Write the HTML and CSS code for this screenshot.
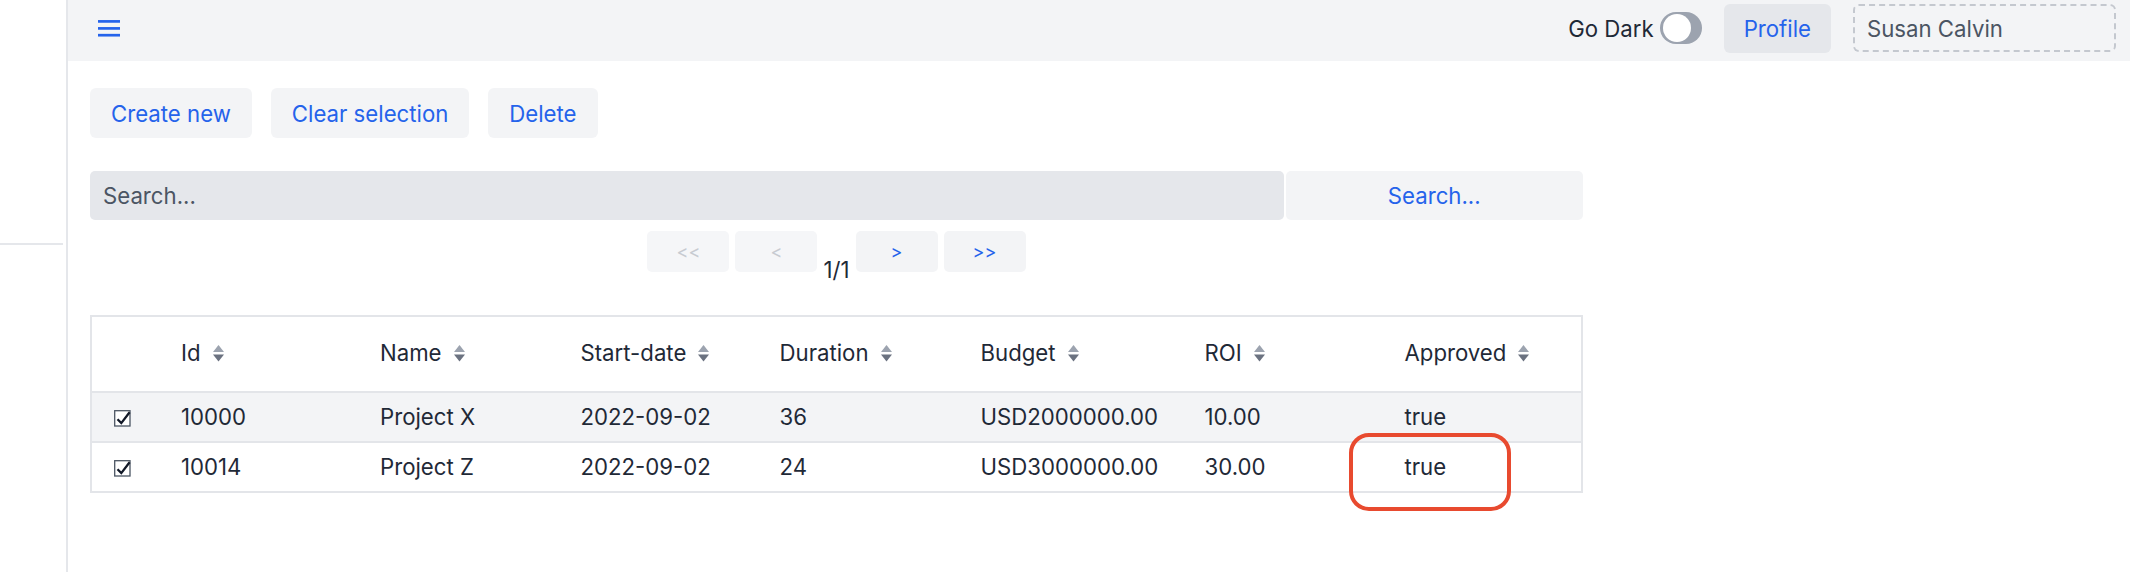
FILE: index.html
```html
<!DOCTYPE html>
<html lang="en">
<head>
<meta charset="utf-8">
<title>Projects</title>
<link rel="stylesheet" href="styles.css">
</head>
<body>
<div class="app">
  <aside class="sidebar"><div class="sidebar-rule"></div></aside>
  <div class="main">
    <header class="topbar">
      <button class="menu-btn" aria-label="Menu">
        <svg width="22" height="17" viewBox="0 0 22 17"><g stroke="#2563eb" stroke-width="2.7"><line x1="0" y1="1.4" x2="22" y2="1.4"/><line x1="0" y1="8.4" x2="22" y2="8.4"/><line x1="0" y1="15.2" x2="22" y2="15.2"/></g></svg>
      </button>
      <div class="top-right">
        <label class="dark-toggle"><span>Go Dark</span><span class="switch"><span class="knob"></span></span></label>
        <button class="profile-btn">Profile</button>
        <div class="user-box">Susan Calvin</div>
      </div>
    </header>
    <main class="content">
      <div class="actions">
        <button class="btn">Create new</button>
        <button class="btn">Clear selection</button>
        <button class="btn">Delete</button>
      </div>
      <div class="search-row">
        <div class="search-input">Search...</div>
        <button class="search-btn">Search...</button>
      </div>
      <div class="pager">
        <button class="pg-btn disabled">&lt;&lt;</button>
        <button class="pg-btn disabled">&lt;</button>
        <span class="pg-info">1/1</span>
        <button class="pg-btn">&gt;</button>
        <button class="pg-btn">&gt;&gt;</button>
      </div>
      <div class="table-wrap">
        <table class="grid">
          <colgroup>
            <col class="c-check"><col class="c-id"><col class="c-name"><col class="c-start"><col class="c-dur"><col class="c-budget"><col class="c-roi"><col>
          </colgroup>
          <thead>
            <tr>
              <th></th>
              <th>Id<span class="sort"><svg width="11" height="17" viewBox="0 0 11 17"><path d="M0 7 L5.5 0 L11 7 Z" fill="#9ca3af"/><path d="M0 9.5 L11 9.5 L5.5 16.5 Z" fill="#6b7280"/></svg></span></th>
              <th>Name<span class="sort"><svg width="11" height="17" viewBox="0 0 11 17"><path d="M0 7 L5.5 0 L11 7 Z" fill="#9ca3af"/><path d="M0 9.5 L11 9.5 L5.5 16.5 Z" fill="#6b7280"/></svg></span></th>
              <th>Start-date<span class="sort"><svg width="11" height="17" viewBox="0 0 11 17"><path d="M0 7 L5.5 0 L11 7 Z" fill="#9ca3af"/><path d="M0 9.5 L11 9.5 L5.5 16.5 Z" fill="#6b7280"/></svg></span></th>
              <th>Duration<span class="sort"><svg width="11" height="17" viewBox="0 0 11 17"><path d="M0 7 L5.5 0 L11 7 Z" fill="#9ca3af"/><path d="M0 9.5 L11 9.5 L5.5 16.5 Z" fill="#6b7280"/></svg></span></th>
              <th>Budget<span class="sort"><svg width="11" height="17" viewBox="0 0 11 17"><path d="M0 7 L5.5 0 L11 7 Z" fill="#9ca3af"/><path d="M0 9.5 L11 9.5 L5.5 16.5 Z" fill="#6b7280"/></svg></span></th>
              <th>ROI<span class="sort"><svg width="11" height="17" viewBox="0 0 11 17"><path d="M0 7 L5.5 0 L11 7 Z" fill="#9ca3af"/><path d="M0 9.5 L11 9.5 L5.5 16.5 Z" fill="#6b7280"/></svg></span></th>
              <th>Approved<span class="sort"><svg width="11" height="17" viewBox="0 0 11 17"><path d="M0 7 L5.5 0 L11 7 Z" fill="#9ca3af"/><path d="M0 9.5 L11 9.5 L5.5 16.5 Z" fill="#6b7280"/></svg></span></th>
            </tr>
          </thead>
          <tbody>
            <tr class="row-alt">
              <td class="check-cell"><svg width="17" height="17" viewBox="0 0 17 17"><rect x="0.7" y="0.7" width="15.3" height="15.3" fill="#fff" stroke="#4b5563" stroke-width="1.3"/><path d="M3.5 9.3 L7.3 13.1 L15.6 2.2" fill="none" stroke="#111827" stroke-width="2.3"/></svg></td>
              <td>10000</td>
              <td>Project X</td>
              <td>2022-09-02</td>
              <td>36</td>
              <td>USD2000000.00</td>
              <td>10.00</td>
              <td>true</td>
            </tr>
            <tr>
              <td class="check-cell"><svg width="17" height="17" viewBox="0 0 17 17"><rect x="0.7" y="0.7" width="15.3" height="15.3" fill="#fff" stroke="#4b5563" stroke-width="1.3"/><path d="M3.5 9.3 L7.3 13.1 L15.6 2.2" fill="none" stroke="#111827" stroke-width="2.3"/></svg></td>
              <td>10014</td>
              <td>Project Z</td>
              <td>2022-09-02</td>
              <td>24</td>
              <td>USD3000000.00</td>
              <td>30.00</td>
              <td>true</td>
            </tr>
          </tbody>
        </table>
        <div class="annotation"></div>
      </div>
    </main>
  </div>
</div>
</body>
</html>
```

FILE: styles.css
```css
* { box-sizing: border-box; }

html, body {
  margin: 0;
  padding: 0;
  background: #ffffff;
}

body {
  font-family: Inter, "Noto Sans", "Liberation Sans", sans-serif;
  font-size: 22.2px;
  color: #1f2937;
}

button {
  font-family: inherit;
  font-size: inherit;
  border: none;
  margin: 0;
  cursor: pointer;
}

.app {
  display: flex;
  min-height: 572px;
}

.sidebar {
  width: 68px;
  flex-shrink: 0;
  border-right: 2px solid #e5e7eb;
}

.sidebar-rule {
  margin-top: 243px;
  width: 63px;
  height: 2px;
  background: #e5e7eb;
}

.main {
  flex: 1;
  min-width: 0;
}

.topbar {
  height: 61px;
  background: #f3f4f6;
  display: flex;
  align-items: center;
  padding: 0 14px 5px 30px;
}

.menu-btn {
  background: transparent;
  padding: 0;
  width: 22px;
  height: 17px;
  display: flex;
}

.top-right {
  margin-left: auto;
  display: flex;
  align-items: center;
}

.dark-toggle {
  display: flex;
  align-items: center;
  gap: 6px;
  color: #1f2937;
}

.switch {
  width: 42px;
  height: 32px;
  border-radius: 16px;
  background: #9ca3af;
  display: flex;
  align-items: center;
  padding: 0 3px;
}

.knob {
  width: 28px;
  height: 28px;
  border-radius: 50%;
  background: #ffffff;
}

.profile-btn {
  margin-left: 22px;
  height: 49px;
  padding: 0 20px;
  background: #e5e7eb;
  color: #2563eb;
  border-radius: 6px;
}

.user-box {
  margin-left: 22px;
  width: 263px;
  height: 48px;
  border: 2px dashed #c4c8cf;
  border-radius: 6px;
  padding-left: 12px;
  display: flex;
  align-items: center;
  color: #4b5563;
}

.content {
  padding: 27px 0 0 22px;
  width: 1515px;
}

.actions {
  display: flex;
  gap: 19px;
}

.btn {
  height: 50px;
  padding: 0 21px;
  background: #f3f4f6;
  color: #2563eb;
  border-radius: 6px;
}

.search-row {
  margin-top: 33px;
  display: flex;
  gap: 1.5px;
  height: 49px;
}

.search-input {
  width: 1194px;
  background: #e5e7eb;
  border-radius: 5px;
  padding-left: 13px;
  display: flex;
  align-items: center;
  color: #4b5563;
}

.search-btn {
  flex: 1;
  background: #f3f4f6;
  color: #2563eb;
  border-radius: 5px;
}

.pager {
  margin-top: 11px;
  display: flex;
  justify-content: center;
  align-items: flex-start;
  gap: 6px;
}

.pg-btn {
  width: 82px;
  height: 41px;
  background: #f3f4f6;
  color: #2563eb;
  border-radius: 5px;
  font-size: 18px;
}

.pg-btn.disabled {
  background: #f5f6f8;
  color: #c7cbd1;
}

.pg-info {
  margin-top: 24px;
  line-height: 30px;
  color: #1f2937;
}

.table-wrap {
  position: relative;
  margin-top: 30px;
  width: 1493px;
  border: 2px solid #e3e5e9;
}

.grid {
  width: 100%;
  border-collapse: separate;
  border-spacing: 0;
  table-layout: fixed;
}

.c-check { width: 69px; }
.c-id { width: 199px; }
.c-name { width: 200.5px; }
.c-start { width: 199px; }
.c-dur { width: 201px; }
.c-budget { width: 224px; }
.c-roi { width: 200px; }

.grid th {
  height: 74px;
  padding: 0 0 3px 20px;
  text-align: left;
  font-weight: 400;
  vertical-align: middle;
  white-space: nowrap;
}

.grid td {
  height: 50px;
  padding: 0 0 1px 20px;
  border-top: 2px solid #e3e5e9;
  vertical-align: middle;
  white-space: nowrap;
}

.grid td.check-cell {
  padding-left: 22px;
  padding-top: 4px;
}

.check-cell svg {
  display: block;
}

.row-alt td {
  background: #f3f4f6;
}

.sort {
  display: inline-block;
  margin-left: 12px;
  vertical-align: -1px;
}

.sort svg {
  display: block;
}

.annotation {
  position: absolute;
  left: 1257px;
  top: 116px;
  width: 162px;
  height: 78px;
  border: 4.5px solid #e84a2f;
  border-radius: 20px;
  pointer-events: none;
}
```
